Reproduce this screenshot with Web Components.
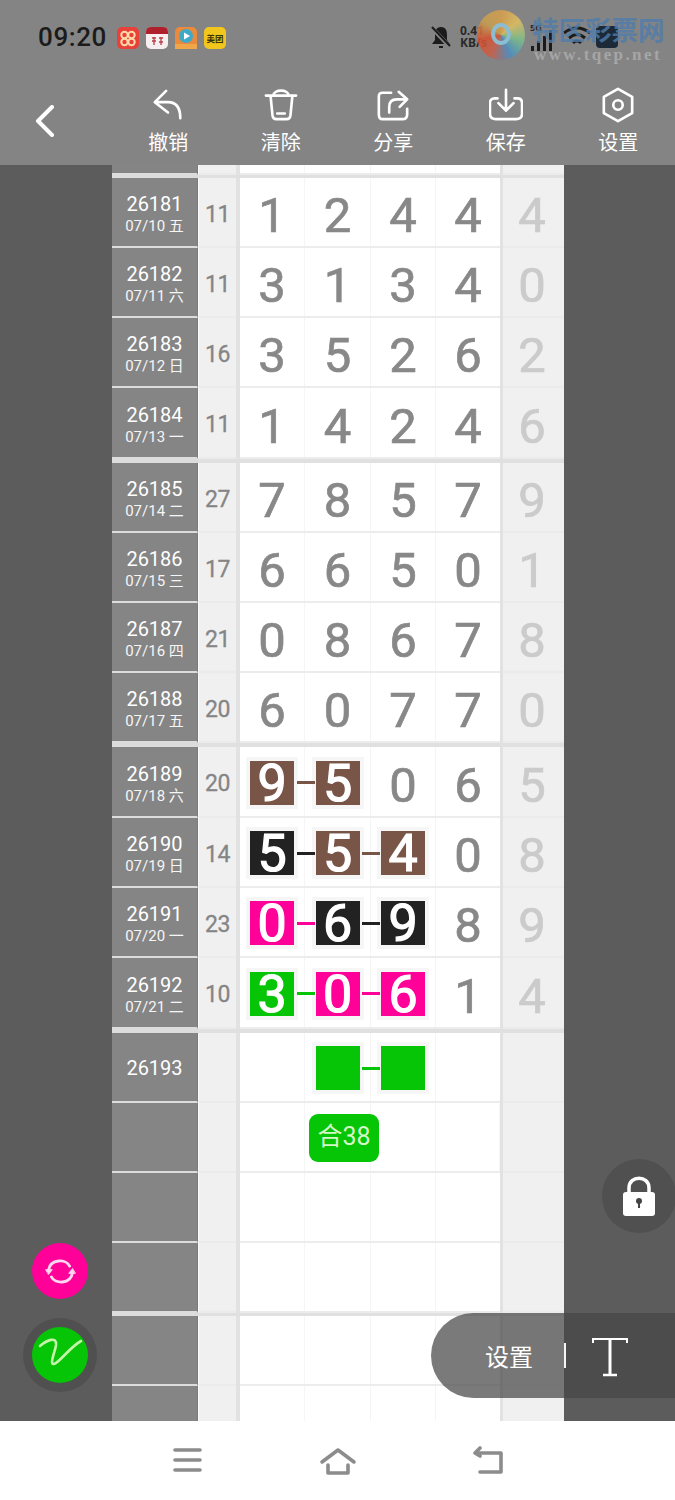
<!DOCTYPE html>
<html lang="zh"><head><meta charset="utf-8"><title>Sheet</title>
<style>
html,body{margin:0;padding:0;background:#5c5c5c}
body{width:675px;height:1500px;overflow:hidden;font-family:"Noto Sans CJK SC","Noto Sans",sans-serif}
</style></head><body>
<app-shell>
  <status-bar slot="head"></status-bar>
  <tool-bar slot="head">
    <tool-btn label="撤销"><svg viewBox="0 0 36 36"><path d="M5 15 H18 Q31 15 31 32 M16 3 L4 15 L18 26"/></svg></tool-btn>
    <tool-btn label="清除"><svg viewBox="0 0 36 36"><path d="M2 8 H34 M10 8 C10 1 26 1 26 8 M7 9 L9 29 Q9.500 33 13 33 H24 Q27.500 33 28 29 L30 9 M14 27 H22"/></svg></tool-btn>
    <tool-btn label="分享"><svg viewBox="0 0 36 36"><path d="M16 5 H7 Q3 5 3 9 V28 Q3 33 7 33 H28 Q33 33 33 28 V22 M14 26 V20 Q14 12 22 12 H33 M24 4 L33 12 L25 20"/></svg></tool-btn>
    <tool-btn label="保存"><svg viewBox="0 0 36 36"><path d="M9 11 H6 Q1 11 1 16 V27 Q1 33 7 33 H29 Q35 33 35 27 V16 Q35 11 30 11 H27 M18 2 V24 M10 16 L18 24 L26 16"/></svg></tool-btn>
    <tool-btn label="设置"><svg viewBox="0 0 36 36"><path d="M18 1 L33 9.500 V26.500 L18 35 L3 26.500 V9.500 Z"/><circle cx="18" cy="18" r="5"/></svg></tool-btn>
  </tool-bar>
  <lottery-sheet slot="main"></lottery-sheet>
  <nav-bar slot="foot"></nav-bar>
  <site-mark slot="over"></site-mark>
  <round-fab slot="over" kind="swap"></round-fab>
  <round-fab slot="over" kind="pen"></round-fab>
  <round-fab slot="over" kind="lock"></round-fab>
  <text-pill slot="over"></text-pill>
</app-shell>
<script>
function el(name, html, init){
  customElements.define(name, class extends HTMLElement{
    connectedCallback(){
      if(this.shadowRoot) return;
      const r=this.attachShadow({mode:'open'});
      r.innerHTML = typeof html==='function' ? html(this) : html;
      if(init) init(this,r);
    }
  });
}
el('app-shell',`<style>
:host{display:flex;flex-direction:column;position:relative;width:675px;height:1500px;overflow:hidden}
.head{background:#848484;height:165px;display:flex;flex-direction:column}
.main{height:1256px;background:#5c5c5c;display:flex;justify-content:flex-start;padding-left:112px;box-sizing:border-box;overflow:hidden}
.foot{height:79px;background:#fff}
</style>
<div class="head"><slot name="head"></slot></div>
<div class="main"><slot name="main"></slot></div>
<div class="foot"><slot name="foot"></slot></div>
<slot name="over"></slot>`);

el('status-bar',`<style>
:host{display:flex;align-items:center;height:74px;box-sizing:border-box;padding:0 55px 0 38px;color:#1b1b1b}
.t{font:500 26px/1 Roboto,"Noto Sans",sans-serif;letter-spacing:.6px;width:79px}
.apps{display:flex;gap:7px;margin-top:1px}
.apps svg{width:22px;height:22px;display:block}
.apps .m{width:22px;height:22px;border-radius:5px;background:#f2c71d;color:#3a3208;font:700 8.500px/22px "Noto Sans CJK SC",sans-serif;text-align:center;white-space:nowrap}
.sp{flex:1}
.r{display:flex;align-items:center}
.sp-t{font:700 12px/12px "Noto Sans",sans-serif;width:67px;margin-left:8px;color:#2a2a2a}
.r svg{display:block}
.g5{display:flex;flex-direction:column;width:29px;margin-left:3px}
.g5 span{font:700 9px/9px "Noto Sans",sans-serif;color:#2a2a2a;margin-bottom:-5px}
</style>
<span class="t">09:20</span>
<div class="apps">
<svg viewBox="0 0 22 22"><rect width="22" height="22" rx="5" fill="#e8413a"/><circle cx="7.500" cy="8" r="3.200" fill="none" stroke="#ffd9a8" stroke-width="2"/><circle cx="14.500" cy="8" r="3.200" fill="none" stroke="#ffd9a8" stroke-width="2"/><circle cx="7.500" cy="15" r="3.200" fill="none" stroke="#ffd9a8" stroke-width="2"/><circle cx="14.500" cy="15" r="3.200" fill="none" stroke="#ffd9a8" stroke-width="2"/></svg>
<svg viewBox="0 0 22 22"><rect width="22" height="22" rx="5" fill="#f7eef0"/><path d="M0 7 V5 Q0 0 5 0 H17 Q22 0 22 5 V7 Z" fill="#b0202c"/><path d="M6 11 H10 M6 14 H10 M8 10 V18 M13 11 H17 M15 10 V18 M13 15 H17" stroke="#b8404a" stroke-width="1.300"/></svg>
<svg viewBox="0 0 22 22"><rect width="22" height="22" rx="5" fill="#e98a3c"/><circle cx="11" cy="9" r="7" fill="#3fa9c9"/><path d="M9 5.500 L15 9 L9 12.500 Z" fill="#fff"/><rect y="17" width="22" height="5" fill="#f2a64a"/></svg>
<span class="m">美团</span>
</div>
<span class="sp"></span>
<div class="r">
<svg width="22" height="24" viewBox="0 0 22 24"><path d="M11 2 C6 2 5 6 5 10 V15 L2 19 H20 L17 15 V10 C17 6 16 2 11 2 Z M9 21 H13 V23 H9 Z" fill="#1b1b1b"/><path d="M2 3 L20 22" stroke="#848484" stroke-width="4"/><path d="M2 2 L20 21" stroke="#1b1b1b" stroke-width="2"/></svg>
<span class="sp-t">0.41<br>KB/s</span>
<div class="g5"><span>5G</span><svg width="29" height="24" viewBox="0 0 29 24"><path d="M1 24 V19 H4 V24 Z M7 24 V14 H10 V24 Z M13 24 V9 H16 V24 Z M19 24 V3 H22 V24 Z" fill="#1b1b1b"/></svg></div>
<svg width="28" height="22" viewBox="0 0 28 22" style="margin-left:4px"><path d="M1 7 Q14 -3 27 7 M6 12 Q14 5 22 12 M10 17 Q14 13 18 17" fill="none" stroke="#1b1b1b" stroke-width="3"/></svg>
<svg width="24" height="22" viewBox="0 0 24 22" style="margin-left:5px"><rect width="22" height="22" rx="4" fill="#1c2a38"/></svg>
</div>`);

el('site-mark',`<style>
:host{position:absolute;left:477px;top:10px;width:190px;height:56px;display:block}
.logo{position:absolute;left:0;top:0;width:48px;height:50px;border-radius:50%;background:conic-gradient(#d9a04a,#e2c060,#7fbf8a,#4a8fc4,#c9604a,#d8502f,#c8a050,#d9a04a);opacity:.85}
.logo:after{content:"";position:absolute;left:14px;top:13px;width:20px;height:22px;border-radius:50%;border:4px solid #8ec8e0;box-sizing:border-box}
.n{position:absolute;left:55px;top:1px;font:700 26.500px/36px "Noto Sans CJK SC",sans-serif;color:#4f7cab;opacity:.8;white-space:nowrap}
.u{position:absolute;left:57px;top:34px;font:700 17px/22px "Liberation Serif",serif;color:#a6a6a6;letter-spacing:2.400px;white-space:nowrap}
</style><div class="logo"></div><span class="n">特区彩票网</span><span class="u">www.tqep.net</span>`);

el('tool-bar',`<style>
:host{display:flex;height:91px;position:relative;padding-left:112px;box-sizing:border-box}
svg{position:absolute;left:34px;top:31px;width:22px;height:32px;fill:none;stroke:#fff;stroke-width:4;stroke-linecap:round;stroke-linejoin:round}
.w{display:flex;width:563px;padding-top:13px;box-sizing:border-box}
</style><svg viewBox="0 0 22 32"><path d="M18 2 L4 16 L18 30"/></svg><div class="w"><slot></slot></div>`);

el('tool-btn',h=>`<style>
:host{display:flex;flex-direction:column;align-items:center;width:112.500px}
.i{width:34px;height:36px;margin-bottom:7px}
::slotted(svg){width:34px;height:36px;fill:none;stroke:#fff;stroke-width:2.800;stroke-linecap:round;stroke-linejoin:round;display:block}
span{font:400 20px/24px "Noto Sans CJK SC",sans-serif;color:#fff}
</style><div class="i"><slot></slot></div><span>${h.getAttribute('label')}</span>`);

const D=[
 ['26181','07/10 五','11','1 2 4 4','4',70],['26182','07/11 六','11','3 1 3 4','0',70],['26183','07/12 日','16','3 5 2 6','2',70],['26184','07/13 一','11','1 4 2 4','6',71,4],
 ['26185','07/14 二','27','7 8 5 7','9',70],['26186','07/15 三','17','6 6 5 0','1',70],['26187','07/16 四','21','0 8 6 7','8',70],['26188','07/17 五','20','6 0 7 7','0',70,4],
 ['26189','07/18 六','20','9b 5b 0 6','5',71],['26190','07/19 日','14','5k 5b 4b 0','8',70],['26191','07/20 一','23','0p 6k 9k 8','9',70],['26192','07/21 二','10','3g 0p 6p 1','4',71,4],
 ['26193','','','- _g _g -','',70],['','','','- - - -','',70,0,1],['','','','- - - -','',70],['','','','- - - -','',70,3],
 ['','','','- - - -','',70],['','','','- - - -','',70]
];
el('lottery-sheet',()=>{
 let s=`<style>:host{display:block;width:452px;height:1256px;overflow:hidden;background:#fff}</style><sheet-row h="10" clip></sheet-row><sheet-sep h="3"></sheet-sep>`;
 D.forEach((d,i)=>{
  s+=`<sheet-row issue="${d[0]}" date="${d[1]}" sum="${d[2]}" nums="${d[3]}" last="${d[4]}" h="${d[5]}" ${d[7]?'badge="合38"':''}></sheet-row>`;
  if(d[6]) s+=`<sheet-sep h="${d[6]}"></sheet-sep>`;
 });
 return s;
});
el('sheet-sep',h=>`<style>:host{display:grid;grid-template-columns:86px 38px 4px 260px 3px 61px;height:${h.getAttribute('h')}px}
.a{background:#dcdcdc}.b{background:#e0e0e0}</style><div class="a"></div><div class="b"></div><div class="b"></div><div class="b"></div><div class="b"></div><div class="b"></div>`);
const CL={b:'#795548',k:'#222222',p:'#ff0099',g:'#06c406'};
el('sheet-row',h=>{
 const a=n=>h.getAttribute(n)||'';
 const nums=(a('nums')||'- - - -').split(' ');
 const cells=nums.map((n,i)=>{
  if(n==='-') return `<div class="c"></div>`;
  const ch=n[0]==='_'?'':n[0], col=n[1];
  if(!col) return `<div class="c"><span class="n">${ch}</span></div>`;
  const nx=nums[i+1];
  const link=nx&&nx[1]?`<i class="l" style="background:${CL[col]}"></i>`:'';
  return `<div class="c"><b class="ball" style="background:${CL[col]}">${ch}</b>${link}</div>`;
 }).join('');
 return `<style>
:host{display:grid;grid-template-columns:86px 38px 4px 260px 3px 61px;height:${a('h')}px;position:relative;overflow:visible}
.d{background:#858585;border-right:1px solid #7a7a7a;box-sizing:border-box;border-bottom:2px solid #dcdcdc;display:flex;flex-direction:column;align-items:center;justify-content:center;color:#fff;padding-top:3px}
.d b{font:400 20px/25px Roboto,"Noto Sans",sans-serif}
.d span{font:400 15px/18px Roboto,"Noto Sans CJK SC",sans-serif;color:#f6f6f6}
.s{background:#f0f0f0;border-bottom:2px solid #ebebeb;border-left:1px solid #fafafa;box-sizing:border-box;display:flex;align-items:center;justify-content:center;font:400 23px/1 Roboto,sans-serif;-webkit-text-stroke:.3px #858585;color:#858585;letter-spacing:-.5px;padding-top:4px}
.v{background:#e2e2e2}
.g{display:grid;grid-template-columns:65px 66px 65px 64px;border-bottom:2px solid #ececec;box-sizing:border-box;position:relative}
.c{display:flex;align-items:center;justify-content:center;position:relative;border-right:1px solid #f5f5f5;box-sizing:border-box}
.c:last-child{border-right:0}
.n{font:400 49px/1 Roboto,sans-serif;-webkit-text-stroke:.7px #888;color:#888;padding-top:7px}
.ball{width:44px;height:44px;outline:4px solid #f6f6f6;font:400 52px/46px Roboto,sans-serif;-webkit-text-stroke:1.200px #fff;color:#fff;text-align:center;position:relative;margin-top:2px}
.l{position:absolute;left:57px;top:34px;width:18px;height:3px;z-index:1}
.x{background:#f0f0f0;border-bottom:2px solid #ebebeb;box-sizing:border-box;display:flex;align-items:center;justify-content:center}
.x span{font:400 49px/1 Roboto,sans-serif;-webkit-text-stroke:.7px #cbcbcb;color:#cbcbcb;padding-top:7px;margin-right:3px}
.tag{position:absolute;left:69px;top:11px;width:70px;height:48px;background:#06c406;border-radius:9px;color:#d4f8c8;font:400 25px/46px Roboto,"Noto Sans CJK SC",sans-serif;text-align:center}
</style>
<div class="d"><b>${a('issue')}</b>${a('date')?`<span>${a('date')}</span>`:''}</div>
<div class="s">${a('sum')}</div><div class="v"></div>
<div class="g">${cells}${a('badge')?`<div class="tag">${a('badge')}</div>`:''}</div>
<div class="v"></div><div class="x"><span>${a('last')}</span></div>`;
});

el('round-fab',h=>{
 const k=h.getAttribute('kind');
 const pos={swap:'left:32px;top:1243px',pen:'left:32px;top:1327px',lock:'left:611px;top:1168px'}[k];
 const bg={swap:'#ff0099',pen:'#06c406',lock:'#505050'}[k];
 const ring={swap:'',pen:'box-shadow:0 0 0 9px #505050;',lock:'box-shadow:0 0 0 9px #505050;'}[k];
 const ic={
  swap:`<svg width="31" height="31" viewBox="0 0 34 34" fill="none" stroke="#ffd8f0" stroke-width="3.200" stroke-linecap="round"><path d="M4 15 C6 3 23 3 27 11 M30 19 C28 31 11 31 7 23"/><path d="M1 15 H8 L4 20 Z M33 19 H26 L30 14 Z" fill="#ffd8f0" stroke-width="1"/></svg>`,
  pen:`<svg width="46" height="46" viewBox="0 0 46 46" fill="none" stroke="#c4f5a8" stroke-width="2.600" stroke-linecap="round" stroke-linejoin="round"><path d="M3 14 C10 8 20 4 19 13 C18 20 12 33 17 32 C22 31 33 15 44 9"/></svg>`,
  lock:`<svg width="36" height="42" viewBox="0 0 36 42"><path d="M8 18 V13 C8 0 28 0 28 13 V18" fill="none" stroke="#fff" stroke-width="3.500"/><rect x="2" y="17" width="32" height="24" rx="3" fill="#fff"/><circle cx="18" cy="26" r="3" fill="#444"/><rect x="17" y="27" width="2" height="6" fill="#444"/></svg>`
 }[k];
 return `<style>:host{position:absolute;${pos};width:56px;height:56px;border-radius:50%;background:${bg};${ring}display:flex;align-items:center;justify-content:center}</style>${ic}`;
});

el('text-pill',`<style>
:host{position:absolute;left:431px;top:1313px;width:244px;height:85px;border-radius:43px 0 0 43px;background:rgba(70,70,70,.72);display:flex;align-items:center;padding-left:54px;box-sizing:border-box;color:#fff}
span{font:400 24px/1 "Noto Sans CJK SC",sans-serif;width:79px}
i{width:2px;height:25px;background:#f4f4f4;margin-right:26px}
svg{display:block;margin-top:3px}
</style><span>设置</span><i></i><svg width="36" height="40" viewBox="0 0 36 40" fill="none" stroke="#fff"><path d="M1 6 V2 H35 V6" stroke-width="2"/><path d="M18 2 V38" stroke-width="3"/><path d="M11 38 H25" stroke-width="2.500"/></svg>`);

el('nav-bar',`<style>
:host{display:block;height:79px}
.w{display:flex;justify-content:flex-start;padding:25px 0 0 172px;gap:115px}
svg{display:block;fill:none;stroke:#8c8c8c;stroke-width:3.600;stroke-linecap:round;stroke-linejoin:round}
</style><div class="w">
<svg width="32" height="30" viewBox="0 0 32 30"><path d="M3 4 H28 M3 14 H28 M3 24 H28"/></svg>
<svg width="38" height="30" viewBox="0 0 38 30"><path d="M3 16 L19 4 L35 16 M9 19 V27 H29 V19"/></svg>
<svg width="32" height="30" viewBox="0 0 32 30" style="margin-left:0"><path d="M3 7 H29 V26 H8 M8 2 L3 7 L8 10"/></svg>
</div>`);
</script>
</body></html>
